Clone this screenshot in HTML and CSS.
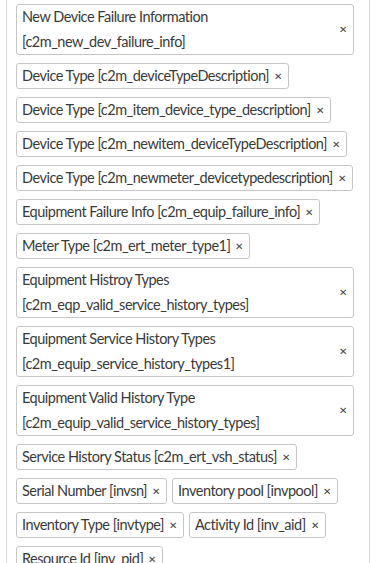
FILE: index.html
```html
<!DOCTYPE html>
<html lang="en">
<head>
    <meta charset="UTF-8">
    <meta name="viewport" content="width=device-width, initial-scale=1.0">
    <title>Selected Fields</title>
    <link rel="stylesheet" href="styles.css">
</head>
<body>
    <div class="field-box">
        <ul class="chip-list">
            <li class="chip chip-long"><span class="chip-text">New Device Failure Information [c2m_new_dev_failure_info]</span><span class="chip-remove">&#x2715;</span></li>
            <li class="chip"><span class="chip-text">Device Type [c2m_deviceTypeDescription]</span><span class="chip-remove">&#x2715;</span></li>
            <li class="chip"><span class="chip-text">Device Type [c2m_item_device_type_description]</span><span class="chip-remove">&#x2715;</span></li>
            <li class="chip"><span class="chip-text">Device Type [c2m_newitem_deviceTypeDescription]</span><span class="chip-remove">&#x2715;</span></li>
            <li class="chip"><span class="chip-text">Device Type [c2m_newmeter_devicetypedescription]</span><span class="chip-remove">&#x2715;</span></li>
            <li class="chip"><span class="chip-text">Equipment Failure Info [c2m_equip_failure_info]</span><span class="chip-remove">&#x2715;</span></li>
            <li class="chip"><span class="chip-text">Meter Type [c2m_ert_meter_type1]</span><span class="chip-remove">&#x2715;</span></li>
            <li class="chip chip-long"><span class="chip-text">Equipment Histroy Types [c2m_eqp_valid_service_history_types]</span><span class="chip-remove">&#x2715;</span></li>
            <li class="chip chip-long"><span class="chip-text">Equipment Service History Types [c2m_equip_service_history_types1]</span><span class="chip-remove">&#x2715;</span></li>
            <li class="chip chip-long"><span class="chip-text">Equipment Valid History Type [c2m_equip_valid_service_history_types]</span><span class="chip-remove">&#x2715;</span></li>
            <li class="chip"><span class="chip-text">Service History Status [c2m_ert_vsh_status]</span><span class="chip-remove">&#x2715;</span></li>
            <li class="chip"><span class="chip-text">Serial Number [invsn]</span><span class="chip-remove">&#x2715;</span></li>
            <li class="chip"><span class="chip-text">Inventory pool [invpool]</span><span class="chip-remove">&#x2715;</span></li>
            <li class="chip"><span class="chip-text">Inventory Type [invtype]</span><span class="chip-remove">&#x2715;</span></li>
            <li class="chip"><span class="chip-text">Activity Id [inv_aid]</span><span class="chip-remove">&#x2715;</span></li>
            <li class="chip"><span class="chip-text">Resource Id [inv_pid]</span><span class="chip-remove">&#x2715;</span></li>
        </ul>
    </div>
</body>
</html>
```

FILE: styles.css
```css
body {
    margin: 0;
    font-family: 'Lato', sans-serif;
    color: #3a3a3a;
    background: #fff;
}
.field-box {
    margin: 0 1px 0 6px;
    border-left: 1px solid #d9d9d9;
    border-right: 1px solid #d9d9d9;
    padding: 4px 15px 0 9px;
    height: 563px;
    overflow: hidden;
    box-sizing: border-box;
}
.chip-list {
    list-style: none;
    margin: 0;
    padding: 0;
    display: flex;
    flex-wrap: wrap;
    gap: 8px 5px;
}
.chip {
    display: flex;
    align-items: center;
    max-width: 100%;
    box-sizing: border-box;
    border: 1px solid #c6c6c6;
    border-radius: 3px;
    padding: 0 5px;
    font-size: 14.5px;
    line-height: 24px;
    letter-spacing: -0.5px;
}
.chip-long {
    line-height: 24.5px;
}
.chip-text {
    flex: 1;
}
.chip-remove {
    font-size: 10px;
    color: #444;
    margin-left: 5px;
    padding-right: 1px;
    letter-spacing: 0;
}
```
